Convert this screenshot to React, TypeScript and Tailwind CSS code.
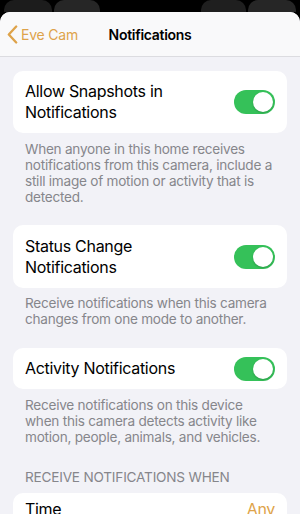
function Toggle() {
  return (
    <div className="w-[41px] h-[24px] rounded-full bg-[#35c159] p-[2px] flex justify-end shrink-0">
      <div className="w-[20px] h-[20px] rounded-full bg-white shadow-[0_1px_2px_rgba(0,0,0,0.2)]" />
    </div>
  )
}

function ToggleCard({ lines, height }: { lines: string[]; height: string }) {
  return (
    <div className={`${height} bg-white rounded-[10px] pl-[12px] pr-[12px] flex items-center justify-between`}>
      <div className="text-[16px] leading-[21px] tracking-[-0.3px] text-black">
        {lines.map((l) => (
          <div key={l}>{l}</div>
        ))}
      </div>
      <Toggle />
    </div>
  )
}

function Note({ children, className }: { children: React.ReactNode; className: string }) {
  return (
    <p className={`${className} px-[12px] text-[13.6px] leading-[16px] tracking-[-0.25px] text-[#86868b]`}>
      {children}
    </p>
  )
}

export default function App() {
  return (
    <div
      className="w-[300px] h-[514px] bg-black overflow-hidden flex flex-col"
      style={{ fontFamily: 'Inter, "Noto Sans", sans-serif' }}
    >
      {/* blurred status bar */}
      <div className="h-[12px] flex gap-[2px] px-[4px] overflow-hidden">
        <div className="w-[48px] h-[24px] rounded-[10px] bg-[#1c1c1c]" />
        <div className="w-[46px] h-[24px] rounded-[10px] bg-[#262626]" />
        <div className="flex-1" />
        <div className="w-[45px] h-[24px] rounded-[10px] bg-[#1f1f1f]" />
        <div className="w-[48px] h-[24px] rounded-[10px] bg-[#262626]" />
      </div>

      <div className="flex-1 rounded-t-[10px] bg-[#f2f2f7] overflow-hidden">
        <div className="h-[45px] bg-[#f9f9fa] border-b border-[#dcdce0] relative flex items-center">
          <div className="flex items-center text-[#dea34a] pl-[7px]">
            <svg width="11" height="19" viewBox="0 0 11 19" fill="none">
              <polyline
                points="9.2,1.5 1.8,9.5 9.2,17.5"
                stroke="currentColor"
                strokeWidth="2.3"
                strokeLinecap="round"
                strokeLinejoin="round"
              />
            </svg>
            <span className="text-[14px] tracking-[-0.2px] ml-[3px]">Eve Cam</span>
          </div>
          <div className="absolute inset-0 flex items-center justify-center text-[14px] font-semibold tracking-[-0.3px] text-black pointer-events-none">
            Notifications
          </div>
        </div>

        <div className="px-[13px]">
          <div className="mt-[14px]">
            <ToggleCard lines={['Allow Snapshots in', 'Notifications']} height="h-[62px]" />
          </div>
          <Note className="mt-[8px]">
            When anyone in this home receives notifications from this camera, include a still image of motion or
            activity that is detected.
          </Note>

          <div className="mt-[20px]">
            <ToggleCard lines={['Status Change', 'Notifications']} height="h-[63px]" />
          </div>
          <Note className="mt-[7px]">Receive notifications when this camera changes from one mode to another.</Note>

          <div className="mt-[21px]">
            <ToggleCard lines={['Activity Notifications']} height="h-[41px]" />
          </div>
          <Note className="mt-[8px]">
            Receive notifications on this device when this camera detects activity like motion, people, animals, and
            vehicles.
          </Note>

          <p className="mt-[24px] px-[12px] text-[13.6px] leading-[16px] tracking-[-0.2px] text-[#86868b] uppercase">
            Receive Notifications When
          </p>

          <div className="mt-[8px] h-[41px] bg-white rounded-[10px] px-[12px] pt-[6px] flex items-start justify-between">
            <span className="text-[16px] leading-[21px] tracking-[-0.3px] text-black">Time</span>
            <span className="text-[16px] leading-[21px] tracking-[-0.3px] text-[#dea34a]">Any</span>
          </div>
        </div>
      </div>
    </div>
  )
}
